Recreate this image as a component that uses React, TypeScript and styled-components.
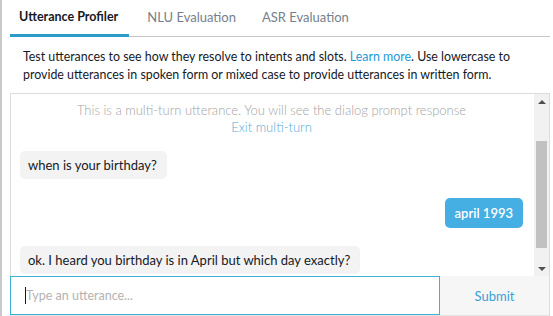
import React from "react";
import styled, { createGlobalStyle } from "styled-components";

const Global = createGlobalStyle`
  html, body { margin: 0; padding: 0; background: #fff; }
  body { font-family: Lato, "Liberation Sans", sans-serif; color: #232f3e; }
  * { box-sizing: border-box; }
`;

const Page = styled.div`
  width: 553px;
  height: 316px;
  border-left: 2px solid #c9c9c9;
  padding: 0 3px 0 8px;
  display: flex;
  flex-direction: column;
  overflow: hidden;
`;

const TabBar = styled.div`
  display: flex;
  height: 37px;
  border-bottom: 1px solid #c6c6c6;
`;

const Tab = styled.div<{ $active?: boolean }>`
  height: 37px;
  margin-bottom: -1px;
  padding: ${(p) => (p.$active ? "0 11px 4px 9px" : "0 9px 4px 9px")};
  margin-right: ${(p) => (p.$active ? "9px" : "8px")};
  display: flex;
  align-items: center;
  font-size: ${(p) => (p.$active ? "12.5px" : "13px")};
  font-weight: ${(p) => (p.$active ? 700 : 400)};
  color: ${(p) => (p.$active ? "#16191f" : "#75808c")};
  box-shadow: ${(p) => (p.$active ? "inset 0 -3px 0 #2b9bc8" : "none")};
`;

const Description = styled.p`
  margin: 0 0 9px;
  padding: 11px 13px 0;
  font-size: 12.4px;
  line-height: 18px;
  color: #16191f;
`;

const Link = styled.a`
  color: #1a9ad6;
  text-decoration: none;
`;

const Panel = styled.div`
  flex: 1;
  border: 1px solid #dcdcdc;
  border-bottom: none;
  display: flex;
  flex-direction: column;
  min-height: 0;
`;

const ChatRow = styled.div`
  flex: 1;
  display: flex;
  min-height: 0;
`;

const Messages = styled.div`
  flex: 1;
  overflow: hidden;
  padding: 8px 11px 0 9px;
  display: flex;
  flex-direction: column;
  gap: 18px;
`;

const SystemNote = styled.div`
  text-align: center;
  font-size: 13px;
  font-weight: 300;
  line-height: 17px;
  color: #a3a3a3;
  margin-bottom: -3px;
`;

const NoteLink = styled.div`
  color: #5ba9d3;
`;

const Bubble = styled.div<{ $user?: boolean }>`
  align-self: ${(p) => (p.$user ? "flex-end" : "flex-start")};
  padding: ${(p) => (p.$user ? "7px 10px" : "6px 10px 6px 8px")};
  margin-top: ${(p) => (p.$user ? "1px" : "0")};
  border-radius: 5px;
  font-size: 13px;
  line-height: 16px;
  flex-shrink: 0;
  background: ${(p) => (p.$user ? "#45aee2" : "#f3f3f3")};
  color: ${(p) => (p.$user ? "#ffffff" : "#16191f")};
  font-weight: ${(p) => (p.$user ? 600 : 400)};
`;

const ScrollTrack = styled.div`
  width: 15px;
  background: #f1f1f1;
  display: flex;
  flex-direction: column;
  align-items: center;
`;

const Arrow = styled.div<{ $down?: boolean }>`
  height: 15px;
  width: 15px;
  display: flex;
  align-items: center;
  justify-content: center;
  &::after {
    content: "";
    border-left: 4px solid transparent;
    border-right: 4px solid transparent;
    ${(p) =>
      p.$down
        ? "border-top: 4px solid #505050;"
        : "border-bottom: 4px solid #505050;"}
  }
`;

const ThumbSpace = styled.div`
  flex: 1;
  width: 100%;
  display: flex;
  flex-direction: column;
  padding: 0 2px;
`;

const Thumb = styled.div`
  margin-top: 32px;
  height: 107px;
  background: #c1c1c1;
`;

const InputRow = styled.div`
  display: flex;
  height: 40px;
  border-bottom: 1px solid #e3e3e3;
`;

const Field = styled.label`
  width: 430px;
  height: 39px;
  margin-left: -1px;
  border: 1px solid #3fb0d8;
  display: flex;
  align-items: center;
  padding-left: 14px;
  background: #fff;
`;

const Caret = styled.span`
  width: 1px;
  height: 17px;
  background: #16191f;
  flex-shrink: 0;
`;

const Input = styled.input`
  flex: 1;
  min-width: 0;
  height: 100%;
  border: none;
  outline: none;
  padding: 0;
  background: transparent;
  font-family: Lato, "Liberation Sans", sans-serif;
  font-size: 12.5px;
  color: #16191f;
  &::placeholder {
    color: #b3b3b3;
  }
`;

const Submit = styled.button`
  flex: 1;
  border: none;
  background: #f6f6f6;
  color: #3a9fd6;
  font-family: Lato, "Liberation Sans", sans-serif;
  font-size: 13px;
  cursor: pointer;
`;

export default function App() {
  return (
    <>
      <Global />
      <Page>
        <TabBar>
          <Tab $active>Utterance Profiler</Tab>
          <Tab>NLU Evaluation</Tab>
          <Tab>ASR Evaluation</Tab>
        </TabBar>
        <Description>
          Test utterances to see how they resolve to intents and slots.{" "}
          <Link href="#">Learn more</Link>. Use lowercase to provide utterances
          in spoken form or mixed case to provide utterances in written form.
        </Description>
        <Panel>
          <ChatRow>
            <Messages>
              <SystemNote>
                This is a multi-turn utterance. You will see the dialog prompt response
                <NoteLink>Exit multi-turn</NoteLink>
              </SystemNote>
              <Bubble>when is your birthday?</Bubble>
              <Bubble $user>april 1993</Bubble>
              <Bubble>ok. I heard you birthday is in April but which day exactly?</Bubble>
            </Messages>
            <ScrollTrack>
              <Arrow />
              <ThumbSpace>
                <Thumb />
              </ThumbSpace>
              <Arrow $down />
            </ScrollTrack>
          </ChatRow>
          <InputRow>
            <Field>
              <Caret />
              <Input placeholder="Type an utterance..." />
            </Field>
            <Submit>Submit</Submit>
          </InputRow>
        </Panel>
      </Page>
    </>
  );
}
